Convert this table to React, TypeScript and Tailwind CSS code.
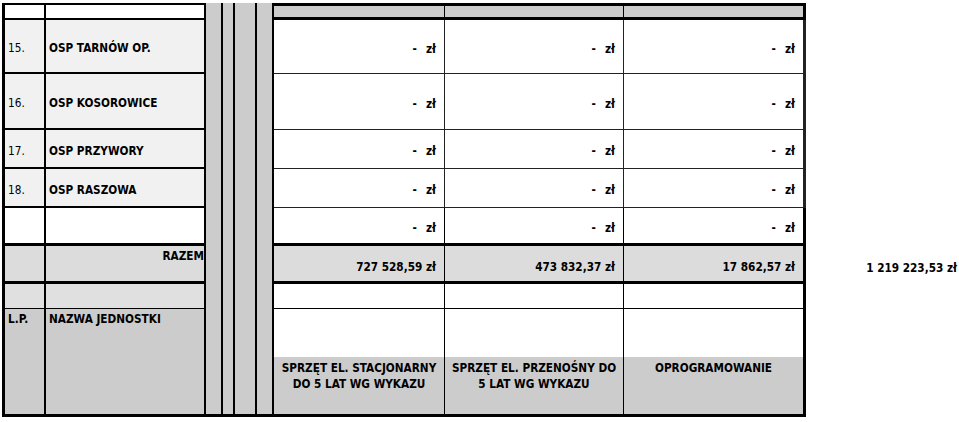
import React from "react";

const font = { fontFamily: '"DejaVu Sans Condensed", "DejaVu Sans", Tahoma, sans-serif' };

function Zl() {
  return (
    <span className="flex items-center font-bold">
      <span>-</span>
      <span className="ml-[9px]">zł</span>
    </span>
  );
}

export default function App() {
  const rows = [
    { lp: "15.", name: "OSP TARNÓW OP.", row: "row-start-2" },
    { lp: "16.", name: "OSP KOSOROWICE", row: "row-start-3" },
    { lp: "17.", name: "OSP PRZYWORY", row: "row-start-4" },
    { lp: "18.", name: "OSP RASZOWA", row: "row-start-5" },
  ];
  return (
    <div className="w-[959px] h-[422px] bg-white overflow-hidden pl-[2px] pt-[3px] text-[11.7px] text-black" style={font}>
      <div className="grid grid-cols-[44px_160px_17px_12px_22px_17px_171px_179px_182px_151px] grid-rows-[17px_54px_56px_39px_39px_38px_38px_25px_48px_60px]">
        {/* header blank row left */}
        <div className="col-start-1 row-start-1 bg-white border-l-[3px] border-t-2 border-r-2 border-b-2 border-black" />
        <div className="col-start-2 row-start-1 bg-white border-t-2 border-r-2 border-b-2 border-black" />

        {rows.map((r) => (
          <React.Fragment key={r.lp}>
            <div className={`col-start-1 ${r.row} bg-[#f1f1f1] border-l-[3px] border-r-2 border-b-2 border-black flex items-center pl-[3px] pt-[6px]`}>
              {r.lp}
            </div>
            <div className={`col-start-2 ${r.row} bg-[#f1f1f1] border-r-2 border-b-2 border-black flex items-center pl-[3px] pt-[6px] font-bold`}>
              {r.name}
            </div>
          </React.Fragment>
        ))}

        {/* empty row */}
        <div className="col-start-1 row-start-6 bg-white border-l-[3px] border-r-2 border-b-[3px] border-black" />
        <div className="col-start-2 row-start-6 bg-white border-r-2 border-b-[3px] border-black" />

        {/* RAZEM */}
        <div className="col-start-1 row-start-7 bg-[#dcdcdc] border-l-[3px] border-r-2 border-b-[3px] border-black" />
        <div className="col-start-2 row-start-7 bg-[#dcdcdc] border-r-2 border-b-[3px] border-black flex justify-end pt-[3px] font-bold leading-[14px]">
          RAZEM
        </div>

        {/* light row */}
        <div className="col-start-1 row-start-8 bg-[#e0e0e0] border-l-[3px] border-r-2 border-b border-black" />
        <div className="col-start-2 row-start-8 bg-[#e0e0e0] border-r-2 border-b border-black" />

        {/* header left */}
        <div className="col-start-1 row-start-9 row-span-2 bg-[#cccccc] border-l-[3px] border-r-2 border-b-[3px] border-black pl-[3px] pt-[3px] font-bold leading-[14px]">
          L.P.
        </div>
        <div className="col-start-2 row-start-9 row-span-2 bg-[#cccccc] border-r-2 border-b-[3px] border-black pl-[3px] pt-[3px] font-bold leading-[14px]">
          NAZWA JEDNOSTKI
        </div>

        {/* strip */}
        <div className="col-start-3 row-start-1 row-span-10 bg-[#cccccc] border-r-2 border-b-[3px] border-black" />
        <div className="col-start-4 row-start-1 row-span-10 bg-[#cccccc] border-r-2 border-b-[3px] border-black" />
        <div className="col-start-5 row-start-1 row-span-10 bg-[#cccccc] border-r-2 border-b-[3px] border-black" />
        <div className="col-start-6 row-start-1 row-span-10 bg-[#cccccc] border-r-2 border-b-[3px] border-black" />

        {/* right table header row */}
        <div className="col-start-7 row-start-1 bg-[#cccccc] border-t-[3px] border-b-[3px] border-r border-black" />
        <div className="col-start-8 row-start-1 bg-[#cccccc] border-t-[3px] border-b-[3px] border-r border-black" />
        <div className="col-start-9 row-start-1 bg-[#cccccc] border-t-[3px] border-b-[3px] border-r-[3px] border-black" />

        {/* money rows */}
        {["row-start-2", "row-start-3", "row-start-4", "row-start-5"].map((row) => (
          <React.Fragment key={row}>
            <div className={`col-start-7 ${row} bg-white border-b border-r border-[#222] flex items-center justify-end pr-[8px] pt-[6px]`}>
              <Zl />
            </div>
            <div className={`col-start-8 ${row} bg-white border-b border-r border-[#222] flex items-center justify-end pr-[8px] pt-[6px]`}>
              <Zl />
            </div>
            <div className={`col-start-9 ${row} bg-white border-b border-r-[3px] border-[#222] flex items-center justify-end pr-[8px] pt-[6px]`}>
              <Zl />
            </div>
          </React.Fragment>
        ))}
        <div className="col-start-7 row-start-6 bg-white border-b-[3px] border-r border-black flex items-center justify-end pr-[8px] pt-[6px]">
          <Zl />
        </div>
        <div className="col-start-8 row-start-6 bg-white border-b-[3px] border-r border-black flex items-center justify-end pr-[8px] pt-[6px]">
          <Zl />
        </div>
        <div className="col-start-9 row-start-6 bg-white border-b-[3px] border-r-[3px] border-black flex items-center justify-end pr-[8px] pt-[6px]">
          <Zl />
        </div>

        {/* totals */}
        <div className="col-start-7 row-start-7 bg-[#dcdcdc] border-b-[3px] border-r border-black flex items-center justify-end pr-[8px] pt-[8px] font-bold">
          727 528,59 zł
        </div>
        <div className="col-start-8 row-start-7 bg-[#dcdcdc] border-b-[3px] border-r border-black flex items-center justify-end pr-[8px] pt-[8px] font-bold">
          473 832,37 zł
        </div>
        <div className="col-start-9 row-start-7 bg-[#dcdcdc] border-b-[3px] border-r-[3px] border-black flex items-center justify-end pr-[8px] pt-[8px] font-bold">
          17 862,57 zł
        </div>
        <div className="col-start-10 row-start-7 flex items-center justify-end pr-0 pt-[8px] font-bold whitespace-nowrap">
          1 219 223,53 zł
        </div>

        {/* blank rows */}
        <div className="col-start-7 row-start-8 bg-white border-b border-r border-black" />
        <div className="col-start-8 row-start-8 bg-white border-b border-r border-black" />
        <div className="col-start-9 row-start-8 bg-white border-b border-r-[3px] border-black" />
        <div className="col-start-7 row-start-9 bg-white border-r border-black" />
        <div className="col-start-8 row-start-9 bg-white border-r border-black" />
        <div className="col-start-9 row-start-9 bg-white border-r-[3px] border-black" />

        {/* column headers */}
        <div className="col-start-7 row-start-10 bg-[#cccccc] border-b-[3px] border-r border-black text-center pt-[3px] font-bold leading-[16px] whitespace-nowrap">
          SPRZĘT EL. STACJONARNY<br />DO 5 LAT WG WYKAZU
        </div>
        <div className="col-start-8 row-start-10 bg-[#cccccc] border-b-[3px] border-r border-black text-center pt-[3px] font-bold leading-[16px] whitespace-nowrap">
          SPRZĘT EL. PRZENOŚNY DO<br />5 LAT WG WYKAZU
        </div>
        <div className="col-start-9 row-start-10 bg-[#cccccc] border-b-[3px] border-r-[3px] border-black text-center pt-[3px] font-bold leading-[16px]">
          OPROGRAMOWANIE
        </div>
      </div>
    </div>
  );
}
